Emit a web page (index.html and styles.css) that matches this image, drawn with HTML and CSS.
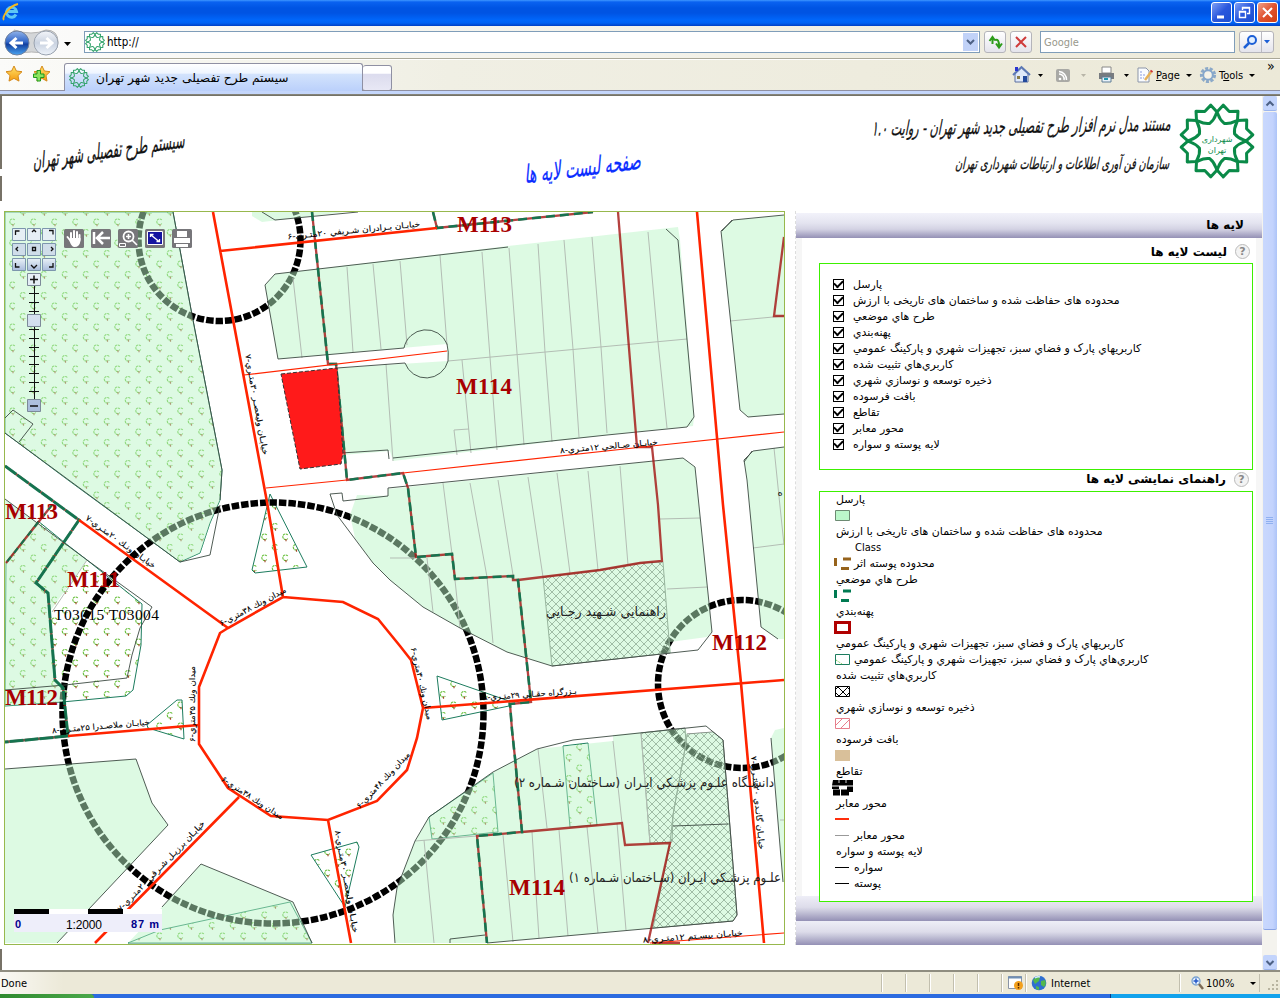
FILE: index.html
```html
<!DOCTYPE html>
<html lang="fa">
<head>
<meta charset="utf-8">
<title>سیستم طرح تفصیلی جدید شهر تهران</title>
<link rel="stylesheet" href="styles.css">
</head>
<body>
<svg class="defs" width="0" height="0" aria-hidden="true">
  <defs>
    <path id="petal" d="M0-32L8-35.500L11-27C8-24 7-21 0-19C-7-21-8-24-11-27L-8-35.500Z"/>
    <symbol id="rosette" viewBox="-38 -38 76 76">
      <g fill="none" stroke="currentColor" stroke-linejoin="round">
        <use href="#petal" transform="rotate(22.5)"/><use href="#petal" transform="rotate(67.5)"/>
        <use href="#petal" transform="rotate(112.5)"/><use href="#petal" transform="rotate(157.5)"/>
        <use href="#petal" transform="rotate(202.5)"/><use href="#petal" transform="rotate(247.5)"/>
        <use href="#petal" transform="rotate(292.5)"/><use href="#petal" transform="rotate(337.5)"/>
      </g>
    </symbol>
    <linearGradient id="gBack" x1="0" y1="0" x2="0" y2="1"><stop offset="0" stop-color="#8fb2ea"/><stop offset=".45" stop-color="#3468c8"/><stop offset=".55" stop-color="#123f9f"/><stop offset="1" stop-color="#4aa4f0"/></linearGradient>
    <linearGradient id="gFwd" x1="0" y1="0" x2="0" y2="1"><stop offset="0" stop-color="#f4f6fa"/><stop offset=".5" stop-color="#c9d2e0"/><stop offset="1" stop-color="#eef3fa"/></linearGradient>
    <linearGradient id="gStar" x1="0" y1="0" x2="0" y2="1"><stop offset="0" stop-color="#ffe36a"/><stop offset="1" stop-color="#f59a10"/></linearGradient>
    <linearGradient id="gBtn" x1="0" y1="0" x2="0" y2="1"><stop offset="0" stop-color="#e9f1f7"/><stop offset="1" stop-color="#a9bcdc"/></linearGradient>
  </defs>
</svg>

<header class="titlebar">
  <svg width="20" height="20" viewBox="0 0 20 20"><path d="M15 12.500A5 5 0 1 1 15.500 9.500H6.500" fill="none" stroke="#5cc6f5" stroke-width="3"/><path d="M3 18C0 16 8 4 17 2" fill="none" stroke="#f5b921" stroke-width="2"/></svg>
  <div class="winbtns">
    <span class="wb"><svg width="19" height="19"><path d="M5 14h7" stroke="#fff" stroke-width="3"/></svg></span>
    <span class="wb"><svg width="19" height="19" fill="none" stroke="#fff"><path d="M7.500 7V4.500h7v6H12M7 5h8" stroke-width="1.400"/><path d="M4.500 8.500h6v6h-6zM4 9h7" stroke-width="1.400"/></svg></span>
    <span class="wb close"><svg width="19" height="19"><path d="M5 5l9 9M14 5l-9 9" stroke="#fff" stroke-width="2"/></svg></span>
  </div>
</header>

<nav class="navrow">
  <svg class="backfwd" width="76" height="30" viewBox="0 0 76 30">
    <path d="M14 3Q32 9 46 3Q58 3 58 15T46 27Q32 23 16 27Z" fill="#d4d6d8" stroke="#b4b4b4"/>
    <circle cx="17" cy="16" r="12" fill="url(#gBack)" stroke="#6f7f9c"/><path d="M23 16H12M16.500 11L11 16l5.500 5" fill="none" stroke="#fff" stroke-width="3"/>
    <circle cx="46" cy="16" r="12" fill="url(#gFwd)" stroke="#9aa3b0"/><path d="M40 16h11M46.500 11l5.500 5l-5.500 5" fill="none" stroke="#fff" stroke-width="3"/>
    <path d="M64 15h7l-3.500 4z"/>
  </svg>
  <div class="address">
    <svg class="fav" width="20" height="20"><use href="#rosette"/></svg>
    <span>http://</span>
    <span class="drop"><svg width="15" height="18"><path d="M4 7l3.500 3.500L11 7" fill="none" stroke="#4d6185" stroke-width="2"/></svg></span>
  </div>
  <span class="sq"><svg width="20" height="20"><path d="M7.500 12V5M4.500 9l3-4l2.500 3.500" fill="none" stroke="#2d9c1a" stroke-width="2"/><path d="M10 8c3-1 4 1 4 6M11 11.500l3 4l3-4" fill="none" stroke="#2d9c1a" stroke-width="2"/></svg></span>
  <span class="sq"><svg width="20" height="20"><path d="M5 5l10 10M15 5L5 15" stroke="#cf3b3b" stroke-width="2"/></svg></span>
  <div class="search">Google</div>
  <span class="sq find"><svg width="33" height="20"><circle cx="12" cy="8" r="4" fill="#e2efff" stroke="#1c5fd6" stroke-width="2"/><path d="M9 11l-5 5" stroke="#1c5fd6" stroke-width="2.500"/><path d="M21.500 0v20" stroke="#b9b9c0"/><path d="M24 8h6l-3 3.500z" fill="#1c5fd6"/></svg></span>
</nav>

<div class="tabrow">
  <svg class="stars" width="60" height="28" viewBox="0 0 60 28">
    <path id="s" d="M14 5l2.400 5 5.600.7-4 3.900 1 5.500-5-2.700-5 2.700 1-5.500-4-3.900 5.600-.7z" fill="url(#gStar)" stroke="#d58a1c"/>
    <use href="#s" x="28"/><path d="M37 9.500h3.500v3.500h3.500v3.500h-3.500v3.500h-3.500v-3.500h-3.500v-3.500h3.500z" fill="#8be35e" stroke="#1f9a1f"/>
  </svg>
  <div class="tab"><svg class="fav" width="20" height="20"><use href="#rosette"/></svg><span dir="rtl">سیستم طرح تفصیلی جدید شهر تهران</span></div>
  <div class="newtab"></div>
  <div class="cmds">
    <svg width="41" height="22"><path d="M3 10v8h13v-8L9.500 4z" fill="#dfe9fa" stroke="#5a6fa0"/><path d="M1 11L9.500 3L18 11" fill="none" stroke="#5d79b5" stroke-width="2"/><path d="M3 3h3v4H3z" fill="#2a36d0"/><path d="M11 12h4v6h-4z" fill="#234a9c"/><path d="M5 12h3v3H5z" fill="#8a7d48"/><path d="M26 10h5l-2.500 3z"/></svg>
    <svg width="45" height="22"><rect x="3" y="5" width="14" height="13" rx="2" fill="#a9a9a5"/><path d="M6 10a5 5 0 0 1 5 6M6 7.500a8 8 0 0 1 7.500 8.500" fill="none" stroke="#fff" stroke-width="1.500"/><circle cx="7" cy="15" r="1.300" fill="#fff"/><path d="M28 10h5l-2.500 3z" fill="#b8b5a8"/></svg>
    <svg width="38" height="22"><path d="M4 3h9v6H4z" fill="#fff" stroke="#888"/><path d="M1 9h15v6H1z" fill="#777b80"/><path d="M4 13h9v5H4z" fill="#e8f2fa" stroke="#5e7d95"/><path d="M6 15h4" stroke="#2299b0" stroke-width="2"/><path d="M26 10h5l-2.500 3z"/></svg>
    <svg width="18" height="22"><path d="M2 4h8l3 3v11H2z" fill="#fafcff" stroke="#8b95a8"/><path d="M4 8h3M4 11h5M4 14h4" stroke="#8a9be0" stroke-dasharray="2 1"/><path d="M9 16l6-8" stroke="#e6b25a" stroke-width="2.500"/><path d="M15 8l1-1.500" stroke="#c33" stroke-width="2.500"/></svg>
    <span class="cmd"><u>P</u>age</span><i class="car"></i>
    <svg width="18" height="22"><circle cx="9" cy="11" r="6.500" fill="none" stroke="#8ca9c8" stroke-width="3.200" stroke-dasharray="3 1.500"/><circle cx="9" cy="11" r="4.800" fill="#f6f3e8" stroke="#86a7cb" stroke-width="2"/></svg>
    <span class="cmd">T<u>o</u>ols</span><i class="car"></i>
    <span class="more">»</span>
  </div>
</div>
<div class="strip"></div>

<main class="view">
  <div class="page">
    <header class="banner">
      <svg width="200" height="112" viewBox="0 97 200 112"><path d="M1 97v73M1 177v25" stroke="#777267" stroke-width="2"/><text class="nast" transform="translate(109,159) rotate(-8) skewX(-12)" font-size="22" textLength="153" lengthAdjust="spacingAndGlyphs">سیستم طرح تفصیلی شهر تهران</text></svg>
      <svg class="mid" width="200" height="112" viewBox="482 97 200 112"><text class="nast blue" transform="translate(583,177) rotate(-7) skewX(-12)" font-size="25" textLength="117" lengthAdjust="spacingAndGlyphs">صفحه لیست لایه ها</text></svg>
      <svg class="right" width="400" height="112" viewBox="862 97 400 112">
        <text class="nast" transform="translate(1021,134) rotate(-1) skewX(-12)" font-size="20" textLength="299" lengthAdjust="spacingAndGlyphs">مستند مدل نرم افزار طرح تفصیلی جدید شهر تهران - روایت ۱.۰</text>
        <text class="nast" transform="translate(1062,170) skewX(-12)" font-size="16" textLength="214" lengthAdjust="spacingAndGlyphs">سازمان فن آوری اطلاعات و ارتباطات شهرداری تهران</text>
        <svg class="logo" x="1179" y="104" width="76" height="76"><use href="#rosette"/></svg>
        <g class="logotext"><text x="1217" y="143">شهرداری</text><text x="1217" y="154">تهران</text></g>
      </svg>
    </header>

    <div class="cols">
      <section class="map">
<svg width="779" height="732" viewBox="5 212 779 732">
  <defs>
    <pattern id="trees" width="21" height="21" patternUnits="userSpaceOnUse" patternTransform="translate(2 212)">
      <g id="tr"><path d="M12.800 8A2.800 2.800 0 1 0 12.800 11.500" fill="none" stroke="#62bd34" stroke-width="1.100" stroke-dasharray="2.400 .7"/><path d="M11 12v2.200" stroke="#a04a28" stroke-width="1.200"/></g>
      <use href="#tr" x="10.500" y="10.500"/><use href="#tr" x="-10.500" y="-10.500"/><use href="#tr" x="10.500" y="-10.500"/><use href="#tr" x="-10.500" y="10.500"/>
    </pattern>
    <pattern id="hatch" width="8" height="8" patternUnits="userSpaceOnUse"><path d="M0 0L8 8M8 0L0 8" stroke="#555" stroke-width=".7"/></pattern>
  </defs>
  <rect x="5" y="212" width="779" height="732" fill="#fff"/>
  <g fill="url(#trees)" stroke="#1c7c5e">
    <path d="M5 212H173L192 315L222 470L220 500L210 523L200 553L180 562L68 480L5 433Z"/>
    <path d="M6 563L38 521L65 543L87 560L142 604L141 645L133 690L126 696L62 702L5 706Z"/>
    <path d="M270 494L307 567L255 573L252 570Z"/><path d="M437 676L509 701V706L442 720Z"/>
    <path d="M311 855L357 842L359 847L345 907Z"/><path d="M177 700H182L184 739L148 728L147 725Z"/>
    <path d="M128 943L160 930L290 902L312 943Z"/>
    <path d="M429 817L493 773L498 832L432 839Z"/><path d="M563 746L588 743L597 825L570 827Z"/>
  </g>
  <g fill="none" stroke="#000" stroke-width="6.500" stroke-dasharray="7.500 2">
    <circle cx="273" cy="713" r="210.500"/><circle cx="219.500" cy="240" r="81"/><circle cx="742" cy="684" r="84"/>
  </g>
  <g fill="url(#hatch)" stroke="#777">
    <path d="M543 577L600 570L640 563L663 562L670 653L552 666Z"/>
    <path d="M641 733L685 728L686 743L673 815L672 842L650 843Z"/>
    <path d="M687 734L713 732L723 740L737 915L733 921L653 928L670 843L673 815L686 743Z"/>
  </g>
  <g class="parcel">
    <path d="M5 212H173L192 315L222 470L220 500L210 523L200 553L180 562L68 480L5 433Z"/>
    <path d="M252 212V216L262 222L345 212Z"/>
    <path d="M265 285L275 274L508 246L678 227L680 240L694 417L693 426L607 435L393 461L390 451L343 455L337 368L448 361L447 344L278 359Z"/>
    <path d="M784 215L733 220L721 231L740 410L748 417L784 414Z"/>
    <path d="M784 447L753 451L744 460L747 480L761 627L778 639H784Z"/>
    <path d="M350 515L357 495L388 496V489L683 458L695 467L712 632L707 637L670 642L671 653L552 666L507 652L460 628L423 607L390 580L373 563L355 538Z"/>
    <path d="M5 499L87 560L51 610L55 680L65 688L62 702L5 706Z"/>
    <path d="M5 769L136 759L152 803L168 825L57 943H5Z"/>
    <path d="M128 943L162 907L201 864L293 902L312 943Z"/>
    <path d="M395 943L393 915L397 888L415 841L429 817L493 772L537 749L613 741V735L685 728L687 734L713 732L723 740L737 915L733 921L487 943Z"/>
    <path d="M784 728L775 730L771 738L783 882H784Z"/>
  </g>
  <path class="lot" d="M400 261L407 345M440 255L447 345M482 252L490 357L497 450M509 248L517 353L524 445M538 244L545 352L552 442M564 240L573 349L579 437M592 237L601 347L607 433M648 232L658 342L667 428M448 361L687 339M462 360L471 453M457 455L454 430L469 429M386 364L393 461M293 278L302 358M347 267L353 352M373 264L381 349M730 321L784 316M774 448L784 545M753 548L784 544M443 483L452 554M470 483L487 577L493 643M498 480L513 575M528 477L543 577M557 473L570 573M588 471L598 570M620 466L628 565M660 519L700 518M667 589L707 587M390 558H415M427 558L433 612M455 580L460 628M538 749L547 828M613 741L622 823M641 733L650 843M503 835L513 942M532 832L539 938M559 830L568 936M587 827L598 933M617 823L626 930M424 840L434 943M415 841L477 836M780 820H784M87 560L52 612"/>
  <path class="edge" d="M173 212L192 315L222 470L220 500M210 555L180 562L5 433M220 505L210 555M278 359L265 285L275 274L508 247M278 359L404 348A22.500 22.500 0 0 1 447 344Q449 352 448 361A22.500 22.500 0 0 1 405 363L337 368M666 229L678 240L694 417L687 427L607 435L393 458M341 453L388 450L389 459M784 215L733 220L721 231L740 410L748 417L784 414M784 447L753 451L744 460L747 480L761 627L778 639M388 488L683 458L695 467L712 632L698 650L552 666L507 652L460 628L423 607L390 580L373 563L337 515L330 494L342 493L343 501L388 496V488M5 499L87 560L152 607L140 628L132 655L127 678L65 685L5 690M5 769L136 759L152 803L168 825L57 943M162 907L201 864L293 902L312 943M395 943L393 915L397 888L415 841L429 817L493 772L537 749L573 740L706 726L723 740L737 915L733 921L487 943M450 943V939L485 935M673 826L728 824M5 418L13 410L33 424L19 442M262 212L275 220L358 212M771 738L783 882M722 231L732 220M744 462L752 451"/>
  <g fill="none" stroke="#a31210" stroke-width="2.300" opacity=".8">
    <path d="M618 212L637 447H652L658 505L662 561L640 563L600 570L518 580M784 237L774 316H784M522 832L622 823L625 845L670 843L648 943M652 943H680"/>
    <path id="zone" d="M312 212L328 364H336L347 480L403 473L408 488L416 557L452 554L455 579L513 576V580H518L531 702L510 704L512 730L515 758L522 832L477 836L487 943M433 212L437 228L593 212"/>
    <path id="zone2" d="M5 466L79 520L36 583L48 593L55 680L63 688L68 736L5 742"/>
    <path d="M52 505L6 563"/>
  </g>
  <g fill="none" stroke="#007a52" opacity=".88"><use href="#zone" stroke-width="2.600" stroke-dasharray="9 5"/><use href="#zone2" stroke-width="3" stroke-dasharray="14 1"/><path d="M52 505L6 563" stroke-width="2" stroke-dasharray="6 5"/></g>
  <path d="M281 374L337 368L343 453L341 464L300 469Z" fill="#ff1a1a" stroke="#333" stroke-dasharray="4 2"/>
  <g fill="none" stroke="#ff2400">
    <path stroke-width="2.600" d="M213 212L267 502L283 597M283 597L343 602L378 619L400 646L411 660L423 708L417 738L407 770L377 801L328 820L271 816L228 788L199 744V687L220 633L228 628ZM79 520L228 628M239 797L95 943M328 820L351 943M199 725L68 736M423 708L784 680M697 212L723 505L741 683L764 943M220 251L437 228"/>
    <path stroke-width="1.200" d="M244 375L447 351M266 488L347 480M403 473L652 446L784 432M650 943L784 933"/>
  </g>
  <g class="zlabel">
    <text x="457" y="232" textLength="55">M113</text><text x="456" y="394" textLength="56">M114</text>
    <text x="5" y="519" textLength="53">M113</text><text x="67" y="587" textLength="53">M111</text>
    <text x="5" y="705" textLength="53">M112</text><text x="712" y="650" textLength="55">M112</text>
    <text x="509" y="895" textLength="56">M114</text>
  </g>
  <text class="tcode" x="54" y="620" textLength="105">T03015 T03004</text>
  <g class="place">
    <text x="606" y="616" textLength="120" lengthAdjust="spacingAndGlyphs">راهنمايي شـهيد رجـايي</text>
    <text x="644" y="787" textLength="260" lengthAdjust="spacingAndGlyphs">دانشـگاه علـوم پزشـكي ايـران (سـاختمان شـماره ۲)</text>
    <text x="675" y="882" textLength="212" lengthAdjust="spacingAndGlyphs">علـوم پزشـكي ايـران (سـاختمان شـماره ۱)</text>
    <text x="780" y="496" font-size="10">ه</text>
  </g>
  <g class="street">
    <text transform="translate(354,233) rotate(-5.500)" textLength="133" lengthAdjust="spacingAndGlyphs">خيابـان بـرادران شـريفي ۲۰متـري-۶</text>
    <text transform="translate(609,449) rotate(-5)" textLength="98" lengthAdjust="spacingAndGlyphs">خيابـان صـالحي ۱۲متـري-۸</text>
    <text transform="translate(254,405) rotate(80)" textLength="102" lengthAdjust="spacingAndGlyphs">خيابـان وليعصـر ۳۰متـري-۷</text>
    <text transform="translate(119,544) rotate(36)" textLength="84" lengthAdjust="spacingAndGlyphs">خيابـان ونـك ۲۰متـري-۷</text>
    <text transform="translate(254,609) rotate(-28)" textLength="74" lengthAdjust="spacingAndGlyphs">ميدان ونك ۳۸متري-۶</text>
    <text transform="translate(195,704) rotate(-90)" textLength="76" lengthAdjust="spacingAndGlyphs">ميدان ونك ۳۵متري-۶</text>
    <text transform="translate(101,729) rotate(-5)" textLength="98" lengthAdjust="spacingAndGlyphs">خيابـان ملاصـدرا ۲۵متـري-۸</text>
    <text transform="translate(251,800) rotate(33)" textLength="72" lengthAdjust="spacingAndGlyphs">ميدان ونك ۳۸متري-۶</text>
    <text transform="translate(385,782) rotate(-47)" textLength="74" lengthAdjust="spacingAndGlyphs">ميدان ونك ۴۸متري-۶</text>
    <text transform="translate(419,684) rotate(77)" textLength="74" lengthAdjust="spacingAndGlyphs">ميدان ونك ۳۰متري-۶</text>
    <text transform="translate(530,697) rotate(-4)" textLength="94" lengthAdjust="spacingAndGlyphs">بـزرگراه حقـاني ۲۹متـري-۸</text>
    <text transform="translate(163,868) rotate(-46)" textLength="122" lengthAdjust="spacingAndGlyphs">خيابـان برزيـل شـرقي ۲۰متـري-۷</text>
    <text transform="translate(344,882) rotate(80)" textLength="104" lengthAdjust="spacingAndGlyphs">خيابـان وليعصـر ۳۰متـري-۸</text>
    <text transform="translate(693,939) rotate(-4)" textLength="100" lengthAdjust="spacingAndGlyphs">خيابـان بيسـتم ۱۲متـري-۸</text>
    <text transform="translate(755,803) rotate(85)" textLength="94" lengthAdjust="spacingAndGlyphs">خيابـان گانـدي ۲۰متـري-۷</text>
  </g>

  <g class="pan">
    <g fill="url(#gBtn)" stroke="#7d96ad"><path d="M12.500 228.500h13v12h-13zM27.500 228.500h13v12h-13zM42.500 228.500h13v12h-13z" fill="#e6eff5"/><path d="M12.500 243.500h13v12h-13zM27.500 243.500h13v12h-13zM42.500 243.500h13v12h-13z" fill="#cfdde9"/><path d="M12.500 258.500h13v12h-13zM27.500 258.500h13v12h-13zM42.500 258.500h13v12h-13z"/></g>
    <path d="M15.500 235v-4h4M32 232l2-2 2 2M49 230.500h4v4M18 247l-2 2 2 2M32.500 247.500h3v3h-3zM51 247l2 2-2 2M15.500 263v4h4M31 265l3 3 3-3M49 267h4v-4" fill="none" stroke="#111" stroke-width="1.300"/>
    <path d="M34.500 286V399M29 293.500h10M29 302.500h10M29 311.500h10M29 329.500h10M29 338.500h10M29 347.500h10M29 356.500h10M29 364.500h10M29 373.500h10M29 382.500h10M29 391.500h10" stroke="#111"/>
    <path d="M27.500 273.500h13v12h-13zM27.500 399.500h13v12h-13zM27.500 314.500h13v12h-13z" fill="url(#gBtn)" stroke="#7d8a99"/>
    <path d="M30 279.500h8M34 275.500v8M30 406h8" stroke="#111" stroke-width="1.500"/>
  </g>
  <g fill="#77767a"><rect x="64" y="229" width="20" height="19" rx="1.500"/><rect x="91" y="229" width="20" height="19" rx="1.500"/><rect x="118" y="229" width="20" height="19" rx="1.500"/><rect x="145" y="229" width="20" height="19" rx="1.500"/><rect x="172" y="229" width="20" height="19" rx="1.500"/></g>
  <path d="M71 239V233M74 239v-8M77 239v-7M79.500 240v-5M67.500 237l4 5" stroke="#fff" stroke-width="2" stroke-linecap="round"/><path d="M70 238h10.500v3q-1 6-6 6q-3 0-5-6z" fill="#fff"/>
  <path d="M94 232v12M110 238H98M103 232l-6 6l6 6" fill="none" stroke="#fff" stroke-width="2.500"/>
  <circle cx="128.500" cy="236.500" r="5" fill="none" stroke="#fff" stroke-width="1.800"/><path d="M126 236.500h5M128.500 234v5M132 240l5 5" stroke="#fff" stroke-width="1.600"/><path d="M119.500 243.500h6v3h-6z" fill="none" stroke="#fff"/>
  <path d="M147.500 231.500h15v13h-15z" fill="#1414a0" stroke="#fff"/><path d="M151 235l8 6.500M150.500 237v-2.500h3M159.500 239v2.500h-3" stroke="#fff" stroke-width="1.300" fill="none"/>
  <path d="M177 231h10v6h-10zM174 238h16v5h-16zM176 244h12v3h-12z" fill="#fff"/>

  <path d="M14 909h148v23H14z" fill="#eeeefa"/><path d="M14 909h148v5H14z" fill="#fff"/><path d="M14 909h35v5H14zM88 909h35v5H88z"/>
  <g class="scale"><text x="15" y="928" class="sb">0</text><text x="66" y="929" textLength="36">1:2000</text><text x="131" y="928" class="sb" textLength="28">87 m</text></g>
</svg>
      </section>

      <aside class="panel">
        <h1 class="bar" dir="rtl">لایه ها</h1>
        <div class="inner">
          <h2 dir="rtl"><span class="q">?</span><span>لیست لایه ها</span></h2>
          <ul class="box layers">
            <li><i class="ck"></i><span dir="rtl">پارسل</span></li>
            <li><i class="ck"></i><span dir="rtl">محدوده های حفاظت شده و ساختمان های تاریخی با ارزش</span></li>
            <li><i class="ck"></i><span dir="rtl">طرح هاي موضعي</span></li>
            <li><i class="ck"></i><span dir="rtl">پهنه‌بندي</span></li>
            <li><i class="ck"></i><span dir="rtl">كاربريهاي پارک و فضاي سبز، تجهيزات شهري و پاركينگ عمومي</span></li>
            <li><i class="ck"></i><span dir="rtl">كاربري‌هاي تثبيت شده</span></li>
            <li><i class="ck"></i><span dir="rtl">ذخيره توسعه و نوسازي شهري</span></li>
            <li><i class="ck"></i><span dir="rtl">بافت فرسوده</span></li>
            <li><i class="ck"></i><span dir="rtl">تقاطع</span></li>
            <li><i class="ck"></i><span dir="rtl">محور معابر</span></li>
            <li><i class="ck"></i><span dir="rtl">لایه پوسته و سواره</span></li>
          </ul>
          <h2 class="second" dir="rtl"><span class="q">?</span><span>راهنمای نمایشی لایه ها</span></h2>
          <ul class="box legend">
            <li><span dir="rtl">پارسل</span></li>
            <li class="ic"><svg width="22" height="16"><path d="M3.500 2.500h14v10h-14z" fill="#bbf7ca" stroke="#6c8a72"/></svg></li>
            <li><span dir="rtl">محدوده های حفاظت شده و ساختمان های تاریخی با ارزش</span></li>
            <li class="in"><span>Class</span></li>
            <li class="ic"><svg width="22" height="16"><path d="M3.500 2v8M11 3h8M9 12.500h8" stroke="#96631c" stroke-width="3"/></svg><span dir="rtl">محدوده پوسته اثر</span></li>
            <li><span dir="rtl">طرح هاي موضعي</span></li>
            <li class="ic"><svg width="22" height="16"><path d="M3.500 2v8M11 3h8M9 12.500h8" stroke="#007a52" stroke-width="3"/></svg></li>
            <li><span dir="rtl">پهنه‌بندي</span></li>
            <li class="ic"><svg width="22" height="16"><path d="M3.500 2.500h14v10h-14z" fill="#fff" stroke="#b00000" stroke-width="3"/></svg></li>
            <li><span dir="rtl">كاربريهاي پارک و فضاي سبز، تجهيزات شهري و پاركينگ عمومي</span></li>
            <li class="ic"><svg width="22" height="16"><path d="M3.500 2.500h14v10h-14z" fill="#fff" stroke="#1c7c5e"/><path d="M4 8l3 2 3 2" stroke="#6cc43c" stroke-dasharray="1 1" fill="none"/></svg><span dir="rtl">كاربري‌هاي پارک و فضاي سبز، تجهيزات شهري و پاركينگ عمومي</span></li>
            <li><span dir="rtl">كاربري‌هاي تثبيت شده</span></li>
            <li class="ic"><svg width="22" height="16"><path d="M3.500 2.500h14v10h-14zM6 3l9 9M16 3l-9 9M4 9l3 3M4 5l2-2M14 12l3-3M15 3l2 2" fill="none" stroke="#000"/></svg></li>
            <li><span dir="rtl">ذخيره توسعه و نوسازي شهري</span></li>
            <li class="ic"><svg width="22" height="16"><path d="M3.500 2.500h14v10h-14zM4 9l6-6M9 12l8-8" fill="none" stroke="#e77f8c"/></svg></li>
            <li><span dir="rtl">بافت فرسوده</span></li>
            <li class="ic"><svg width="22" height="16"><path d="M3 2h15v11H3z" fill="#d9c09a"/></svg></li>
            <li><span dir="rtl">تقاطع</span></li>
            <li class="ic"><svg width="22" height="16"><path d="M1 0h20v5.500H0zM0 6.500h7v2.500h-7zM15 6.500h6v5h-6zM1 9.500h7v6H1zM9 9.500h8v6H9zM17 11h4v1h-4z"/><path d="M7 0v3M14 0v3" stroke="#fff" stroke-width=".8"/></svg></li>
            <li><span dir="rtl">محور معابر</span></li>
            <li class="ic"><svg width="22" height="16"><path d="M3 7h14" stroke="#ff2e0c" stroke-width="2"/></svg></li>
            <li class="ic"><svg width="22" height="16"><path d="M3 7.500h14" stroke="#999"/></svg><span dir="rtl">محور معابر</span></li>
            <li><span dir="rtl">لایه پوسته و سواره</span></li>
            <li class="ic"><svg width="22" height="16"><path d="M3 7.500h14" stroke="#000"/></svg><span dir="rtl">سواره</span></li>
            <li class="ic"><svg width="22" height="16"><path d="M3 7.500h14" stroke="#000"/></svg><span dir="rtl">پوسته</span></li>
          </ul>
        </div>
        <div class="foot1"></div>
        <div class="foot2"></div>
      </aside>
    </div>
    <div class="tail"></div>
  </div>

  <div class="scroll">
    <span class="sbtn"><svg width="14" height="15"><path d="M3.500 9.500l3.500-3.500l3.500 3.500" fill="none" stroke="#4d6185" stroke-width="2"/></svg></span>
    <span class="thumb"><svg width="14" height="8"><path d="M3 .5h7M3 2.500h7M3 4.500h7M3 6.500h7" stroke="#8fb0f0"/></svg></span>
    <span class="gap"></span>
    <span class="sbtn"><svg width="14" height="15"><path d="M3.500 6l3.500 3.500l3.500-3.500" fill="none" stroke="#4d6185" stroke-width="2"/></svg></span>
  </div>
</main>

<footer class="status">
  <span class="done">Done</span>
  <i class="cell"></i><i class="cell"></i><i class="cell"></i><i class="cell"></i><i class="cell"></i>
  <span class="cell ico"><svg width="17" height="16"><path d="M1.500 1.500h13v12h-13z" fill="#fff" stroke="#8a94a5"/><path d="M1 2.500h14" stroke="#6f8fb5" stroke-width="2"/><circle cx="11.500" cy="10.500" r="4.500" fill="#f3a01c"/><path d="M11.500 8v3M11.500 12v1.500" stroke="#5b2a00" stroke-width="1.500"/></svg></span>
  <span class="cell net"><svg width="16" height="16"><circle cx="8" cy="8" r="7.300" fill="#2f6fd0"/><path d="M2 5Q6 0 9 2L8 6L4 9ZM10 6l4-1q2 4-1 7l-3-2zM5 11l3 1v3l-3-1z" fill="#53b84d"/><path d="M4 3q3-2 5-1" stroke="#d6ecff" stroke-width="1.500" fill="none"/></svg><span>Internet</span></span>
  <span class="cell zoomc"><svg width="13" height="14"><circle cx="5" cy="5" r="4" fill="#e8f4ff" stroke="#7aa2cf" stroke-width="1.300"/><path d="M5 2.500v5M2.500 5h5" stroke="#2255c8" stroke-width="1.500"/><path d="M8 8l4 5" stroke="#7b6a55" stroke-width="2.500"/></svg><span>100%</span><i class="car"></i></span>
  <svg class="grip" width="12" height="12"><path d="M9 1h2M5 5h2M9 5h2M1 9h2M5 9h2M9 9h2" stroke="#b8b4a0" stroke-width="2"/></svg>
</footer>
<div class="taskbar"><span class="start"></span><span class="task"></span><span class="tray"></span></div>
</body>
</html>
```

FILE: styles.css
```css
* { box-sizing: border-box; }
body { margin: 0; width: 1280px; height: 998px; overflow: hidden; display: flex; flex-direction: column; background: #fff; font: 11px "DejaVu Sans Condensed", "DejaVu Sans", sans-serif; color: #000; }
svg { display: block; flex: none; }
.defs { position: absolute; }
ul, h1, h2 { margin: 0; padding: 0; list-style: none; }

.titlebar { height: 26px; flex: none; display: flex; justify-content: space-between; padding: 2px 2px 0 1px; background: linear-gradient(#3f97ff 0, #0a62f0 2px, #0054e3 8px, #0054e3 13px, #0066fb 20px, #0062f3 23px, #003fc4 26px); }
.winbtns { display: flex; gap: 2px; }
.wb { width: 21px; height: 21px; border: 1px solid #fff; border-radius: 3px; background: linear-gradient(135deg, #7f9ff5, #2a58dd 50%, #1c4fd0); }
.wb.close { background: linear-gradient(135deg, #f0a088, #e0532f 50%, #cf3e12); }

.navrow { height: 33px; flex: none; display: flex; align-items: center; padding: 0 6px 0 0; background: linear-gradient(90deg, #fbfbfb, #f3f2ea 50%, #ece9d8); border-bottom: 1px solid #a9a797; }
.backfwd { margin-right: 8px; }
.address { width: 896px; height: 22px; border: 1px solid #7f9db9; background: #fff; display: flex; align-items: center; font-size: 11.500px; }
.fav { color: #36a46d; stroke-width: 4; margin: 0 2px 0 0; }
.drop { margin: 0 1px 0 auto; width: 15px; height: 18px; background: #c1d2f8; }
.sq { width: 22px; height: 22px; margin-left: 4px; border: 1px solid #b4b4ba; border-radius: 3px; background: linear-gradient(#fff, #e4e4ec); }
.search { width: 195px; height: 22px; margin-left: 8px; padding: 4px 3px; border: 1px solid #7f9db9; background: #fff; color: #98988c; }
.find { width: 35px; }

.tabrow { height: 32px; flex: none; display: flex; padding-top: 3px; background: linear-gradient(90deg, #fbfbf9, #f0efe4 35%, #ece9d8); border-top: 1px solid #fff; border-bottom: 1px solid #8f90a3; }
.stars { margin: -2px 4px 0 0; }
.tab { width: 299px; height: 29px; display: flex; align-items: center; padding-left: 4px; border: 1px solid #8f90a3; border-bottom: 0; border-radius: 3px 3px 0 0; background: linear-gradient(#fff 0, #eef5ff 33%, #d3e3fc 36%, #b9cffb 100%); font: 12.200px "DejaVu Sans", sans-serif; white-space: nowrap; }
.tab .fav { margin-right: 7px; }
.newtab { width: 29px; height: 26px; margin-top: 2px; border: 1px solid #8f90a3; border-left: 0; border-radius: 3px; background: linear-gradient(#fff 30%, #dcdcee 35%, #e8e8f5); }
.cmds { margin-left: auto; display: flex; align-items: center; height: 24px; }
.cmd { width: 31px; padding-left: 2px; }
.car { width: 0; height: 0; border: 3px solid transparent; border-top-color: #000; border-bottom: 0; margin: 1px 7px 0 1px; }
.more { width: 18px; padding-left: 5px; font-size: 14px; margin-top: -19px; }
.strip { height: 5px; flex: none; background: linear-gradient(#c4d6fb 3px, #8d8c83 3px, #6c6a5e); }

.view { flex: 1; min-height: 0; display: flex; }
.page { width: 1262px; display: flex; flex-direction: column; }
.banner { height: 115px; flex: none; display: flex; align-items: flex-start; }
.banner svg { overflow: visible; }
.mid { margin-left: 282px; }
.right { margin-left: 180px; }
.nast { font-family: "DejaVu Sans", sans-serif; text-anchor: middle; fill: #111; stroke: #111; stroke-width: .3; direction: rtl; }
.nast.blue { fill: #0a2cff; stroke: #0a2cff; }
.logo { color: #0a8a48; stroke-width: 3; }
.logotext { font: 8px "DejaVu Sans", sans-serif; fill: #0a8a48; text-anchor: middle; }
.cols { display: flex; height: 734px; }
.map { width: 781px; height: 734px; margin: 0 10px 0 4px; border: 1px solid #97b84d; overflow: hidden; }
.parcel { fill: rgb(186,245,198); fill-opacity: .49; }
.lot { fill: none; stroke: #b3bdb4; }
.edge { fill: none; stroke: #3c4a42; stroke-width: .9; }
.zlabel { font: bold 23px "Liberation Serif", serif; fill: #a80000; }
.tcode { font: 15.500px "Liberation Serif", serif; }
.place { font: 13px "DejaVu Sans", sans-serif; text-anchor: middle; direction: rtl; fill: #222; }
.street { font: 8px "DejaVu Sans", sans-serif; text-anchor: middle; direction: rtl; fill: #000; stroke: #000; stroke-width: .1; }
.scale { font: 12px "Liberation Sans", sans-serif; }
.sb { font-weight: bold; font-size: 11px; fill: #00008b; }

.panel { width: 467px; height: 734px; display: flex; flex-direction: column; border-left: 1px dashed #ddd; }
.bar { height: 25px; flex: none; margin-top: 2px; padding: 4px 18px 0 0; font: bold 12px/16px "DejaVu Sans", sans-serif; background: linear-gradient(#f2f2fa, #e4e4f0 40%, #d3d2e3 65%, #9490b5); }
.inner { height: 658px; flex: none; padding: 4px 3px 0 17px; border-left: 6px solid #f6f6f6; border-right: 6px solid #f6f6f6; }
h2 { display: flex; align-items: center; height: 21px; font: bold 12px/16px "DejaVu Sans", sans-serif; gap: 8px; padding: 0 3px 2px 0; }
.second { height: 22px; padding: 0 4px 4px 0; }
.q { width: 15px; height: 15px; border: 1px solid #bbb; border-radius: 8px; background: #f3f3f3; color: #888; text-align: center; font-size: 11px; line-height: 13px; }
.box { width: 434px; border: 1px solid #3cf000; background: #fff; }
.layers { height: 207px; padding: 12px 0 0 13px; }
.box li { height: 16px; display: flex; align-items: center; white-space: nowrap; font: 10.950px/16px "DejaVu Sans", sans-serif; }
.layers li span { padding-top: 1px; }
.ck { width: 11px; height: 11px; margin: 0 9px 0 0; border: 1px solid #000; display: grid; place-items: center; }
.ck::before { content: ""; width: 7px; height: 4px; margin-top: -3px; border: solid #000; border-width: 0 0 2px 2px; transform: rotate(-45deg); }
.legend { height: 411px; margin-top: -1px; position: relative; }
.legend li { padding-left: 16px; }
.legend li.ic { padding-left: 12px; }
.legend li.in { padding-left: 35px; font: 11px/16px "DejaVu Sans Condensed", sans-serif; }
.foot1, .foot2 { flex: none; background: linear-gradient(#eeeef7, #dddcea 45%, #cac9dc 60%, #9490b5); }
.foot1 { height: 25px; }
.foot2 { height: 24px; }
.tail { flex: 1; margin-top: 4px; border-left: 2px solid #777267; }

.scroll { width: 15px; display: flex; flex-direction: column; background: #f4f3ee; }
.sbtn { height: 15px; margin-left: 1px; border-radius: 2px; background: #c3d4fc; border-bottom: 1px solid #9db6ee; }
.thumb { height: 818px; margin: 1px 0 0 1px; display: grid; place-items: center; border-radius: 2px; background: linear-gradient(90deg, #c9d8fd, #c3d3fd 70%, #adc4f8); border-bottom: 1px solid #8aa4e4; }
.gap { flex: 1; }

.status { height: 24px; flex: none; display: flex; align-items: center; border-top: 2px solid #8f8d80; background: linear-gradient(90deg, rgba(255,255,255,.7), transparent 5%), #ece9d8; }
.done { width: 881px; padding: 1px 0 0 1px; }
.cell { height: 18px; width: 24px; border-left: 1px solid #c2bfae; box-shadow: inset 1px 0 #fff; display: flex; align-items: center; gap: 4px; padding-left: 5px; }
.cell.net { width: 154px; }
.cell.zoomc { width: 81px; padding-left: 11px; gap: 2px; border-right: 1px solid #c2bfae; }
.zoomc .car { margin-left: 14px; }
.grip { margin: 6px 0 0 7px; }
.taskbar { height: 4px; flex: none; display: flex; background: #2a62d8; }
.start { width: 94px; background: linear-gradient(90deg, #2f8a2f, #4ba84a); border-radius: 0 4px 0 0; }
.task { flex: 1; background: #2c6be0; }
.tray { width: 170px; background: #12a2ec; border-left: 1px solid #0a3a8a; }
```
